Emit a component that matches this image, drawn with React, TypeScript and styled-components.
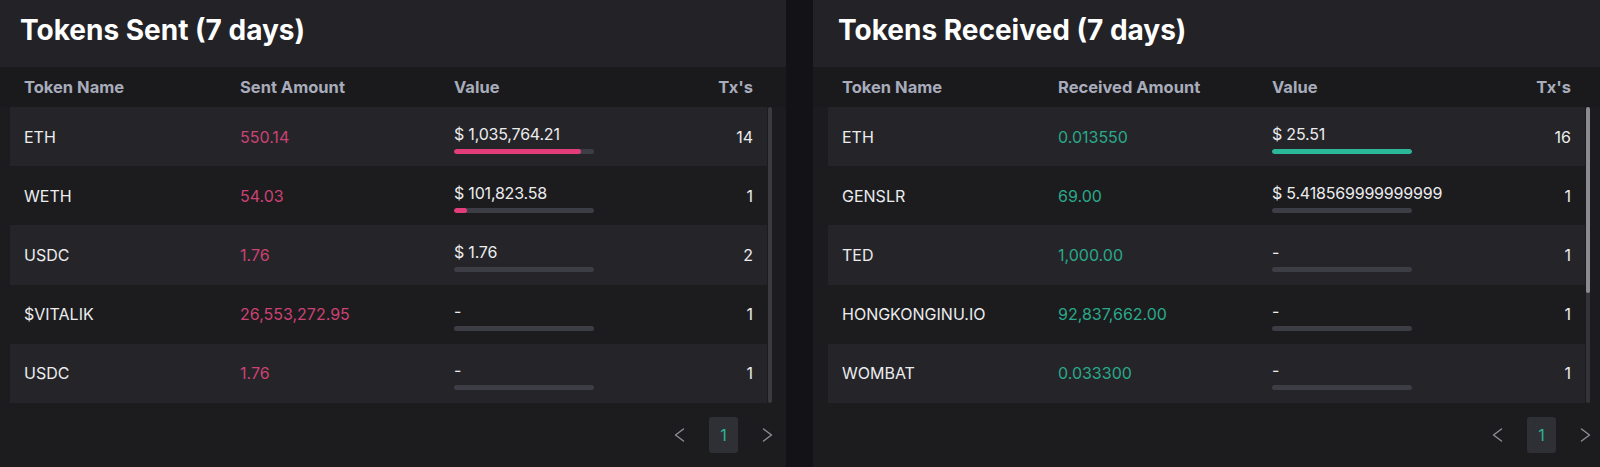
import React from "react";
import styled, { createGlobalStyle } from "styled-components";

const Global = createGlobalStyle`
  html, body { margin: 0; padding: 0; background: #131317; }
  body { font-family: Inter, "Noto Sans", sans-serif; -webkit-font-smoothing: antialiased; }
  * { box-sizing: border-box; }
`;

const Page = styled.div`
  width: 1609px;
  height: 467px;
  margin-left: -5px;
  display: grid;
  grid-template-columns: 791px 791px;
  column-gap: 27px;
  background: #131317;
  overflow: hidden;
`;

const Panel = styled.section`
  display: flex;
  flex-direction: column;
  height: 467px;
  background: #1c1c1f;
`;

const TitleBar = styled.div`
  height: 67px;
  display: flex;
  align-items: center;
  padding: 0 25px 7px 25px;
  background: #232327;
`;

const Title = styled.h2`
  margin: 0;
  font-size: 28px;
  font-weight: 700;
  color: #ffffff;
  letter-spacing: 0;
`;

const HeadBand = styled.div`
  height: 40px;
  background: #1a1a1d;
  padding: 0 19px 0 15px;
  display: flex;
  align-items: center;
`;

const Grid = styled.div`
  width: 100%;
  display: grid;
  grid-template-columns: 216px 214px 186px 1fr;
  align-items: center;
  padding: 0 14px;
`;

const HeadCell = styled.div<{ $right?: boolean }>`
  font-size: 16.5px;
  font-weight: 700;
  color: #a8acbb;
  text-align: ${(p) => (p.$right ? "right" : "left")};
`;

const Body = styled.div`
  display: flex;
  padding: 0 14px 0 15px;
`;

const Rows = styled.div`
  flex: 1;
  display: flex;
  flex-direction: column;
`;

const Row = styled(Grid)<{ $alt: boolean }>`
  height: 59.2px;
  background: ${(p) => (p.$alt ? "#1c1c1f" : "#252529")};
`;

const Cell = styled.div<{ $color?: string; $right?: boolean }>`
  font-size: 16px;
  line-height: 20px;
  color: ${(p) => p.$color || "#ececee"};
  text-align: ${(p) => (p.$right ? "right" : "left")};
  white-space: nowrap;
  overflow: hidden;
`;

const ValueCell = styled.div`
  display: flex;
  flex-direction: column;
  gap: 5px;
  margin-top: 4px;
  overflow: hidden;
`;

const ValueText = styled.div`
  font-size: 16px;
  line-height: 20px;
  color: #ececee;
  white-space: nowrap;
  overflow: hidden;
  letter-spacing: -0.2px;
`;

const Track = styled.div`
  width: 140px;
  height: 5px;
  border-radius: 3px;
  background: #3c3d45;
  overflow: hidden;
`;

const Fill = styled.div<{ $color: string }>`
  height: 100%;
  border-radius: 3px;
  background: ${(p) => p.$color};
`;

const ScrollTrack = styled.div<{ $dim: string }>`
  width: 4px;
  margin-left: 1px;
  border-radius: 2px;
  background: ${(p) => p.$dim};
  display: flex;
  flex-direction: column;
`;

const ScrollThumb = styled.div`
  width: 4px;
  border-radius: 2px;
  background: #8b8b90;
`;

const Pager = styled.div`
  flex: 1;
  display: flex;
  align-items: center;
  justify-content: flex-end;
  gap: 24px;
  padding: 0 13px 0 0;
`;

const Arrow = styled.button`
  border: 0;
  background: transparent;
  padding: 0;
  width: 11px;
  height: 14px;
  display: flex;
  align-items: center;
  justify-content: center;
  color: #8e8e94;
`;

const PageBox = styled.div`
  width: 29px;
  height: 36px;
  border-radius: 3px;
  background: #2e3035;
  color: #2bb596;
  font-size: 16px;
  display: flex;
  align-items: center;
  justify-content: center;
`;

type Item = { name: string; amount: string; value: string; pct: number; tx: string };

const sent: Item[] = [
  { name: "ETH", amount: "550.14", value: "$ 1,035,764.21", pct: 91, tx: "14" },
  { name: "WETH", amount: "54.03", value: "$ 101,823.58", pct: 9, tx: "1" },
  { name: "USDC", amount: "1.76", value: "$ 1.76", pct: 0, tx: "2" },
  { name: "$VITALIK", amount: "26,553,272.95", value: "-", pct: 0, tx: "1" },
  { name: "USDC", amount: "1.76", value: "-", pct: 0, tx: "1" },
];

const received: Item[] = [
  { name: "ETH", amount: "0.013550", value: "$ 25.51", pct: 100, tx: "16" },
  { name: "GENSLR", amount: "69.00", value: "$ 5.418569999999999", pct: 0, tx: "1" },
  { name: "TED", amount: "1,000.00", value: "-", pct: 0, tx: "1" },
  { name: "HONGKONGINU.IO", amount: "92,837,662.00", value: "-", pct: 0, tx: "1" },
  { name: "WOMBAT", amount: "0.033300", value: "-", pct: 0, tx: "1" },
];

const Chevron = ({ dir }: { dir: "l" | "r" }) => (
  <svg width="11" height="14" viewBox="0 0 11 14" fill="none">
    <polyline
      points={dir === "l" ? "9.5,1 1.5,7 9.5,13" : "1.5,1 9.5,7 1.5,13"}
      stroke="currentColor"
      strokeWidth="1.4"
      strokeLinecap="round"
      strokeLinejoin="round"
    />
  </svg>
);

function TokenTable({
  title,
  amountLabel,
  items,
  amountColor,
  barColor,
  thumb,
}: {
  title: string;
  amountLabel: string;
  items: Item[];
  amountColor: string;
  barColor: string;
  thumb: number;
}) {
  return (
    <Panel>
      <TitleBar>
        <Title>{title}</Title>
      </TitleBar>
      <HeadBand>
        <Grid>
          <HeadCell>Token Name</HeadCell>
          <HeadCell>{amountLabel}</HeadCell>
          <HeadCell>Value</HeadCell>
          <HeadCell $right>Tx's</HeadCell>
        </Grid>
      </HeadBand>
      <Body>
        <Rows>
          {items.map((it, i) => (
            <Row key={i} $alt={i % 2 === 1}>
              <Cell>{it.name}</Cell>
              <Cell $color={amountColor}>{it.amount}</Cell>
              <ValueCell>
                <ValueText>{it.value}</ValueText>
                <Track>
                  <Fill $color={barColor} style={{ width: `${it.pct}%` }} />
                </Track>
              </ValueCell>
              <Cell $right>{it.tx}</Cell>
            </Row>
          ))}
        </Rows>
        <ScrollTrack $dim={thumb > 0 ? "#333338" : "#3a3a3f"}>
          {thumb > 0 && <ScrollThumb style={{ height: `${thumb}px` }} />}
        </ScrollTrack>
      </Body>
      <Pager>
        <Arrow aria-label="previous">
          <Chevron dir="l" />
        </Arrow>
        <PageBox>1</PageBox>
        <Arrow aria-label="next">
          <Chevron dir="r" />
        </Arrow>
      </Pager>
    </Panel>
  );
}

export default function App() {
  return (
    <>
      <Global />
      <Page>
        <TokenTable
          title="Tokens Sent (7 days)"
          amountLabel="Sent Amount"
          items={sent}
          amountColor="#cc4273"
          barColor="#e23c7b"
          thumb={0}
        />
        <TokenTable
          title="Tokens Received (7 days)"
          amountLabel="Received Amount"
          items={received}
          amountColor="#2aa98a"
          barColor="#2bb898"
          thumb={186}
        />
      </Page>
    </>
  );
}
